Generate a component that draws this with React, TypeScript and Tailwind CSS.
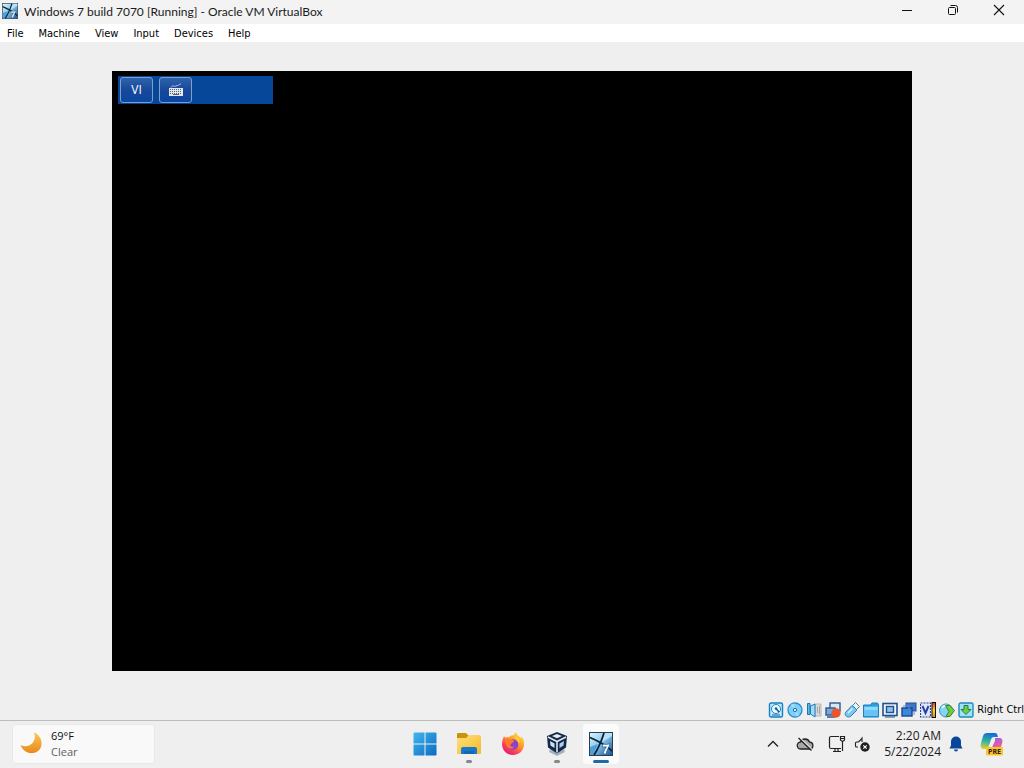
import React from "react";

const menus = ["File", "Machine", "View", "Input", "Devices", "Help"];

// Windows 7 guest logo, used in the title bar and in the taskbar
function GuestLogo({ className, id }: { className: string; id: string }) {
  return (
    <svg viewBox="0 0 24 24" className={className}>
      <defs>
        <linearGradient id={id} x1="0" y1="0" x2="1" y2="1">
          <stop offset="0" stopColor="#e2f5fc" />
          <stop offset="0.45" stopColor="#8ccbee" />
          <stop offset="1" stopColor="#0f5296" />
        </linearGradient>
      </defs>
      <rect x="0.5" y="0.5" width="23" height="23" fill={`url(#${id})`} stroke="#2c3f50" />
      <path d="M1 15l8-3-5 11H1z" fill="#4f9fdc" />
      <path d="M15 1h8v3l-10 6-1-1z" fill="#b4e3f6" />
      <path d="M1 5.500C8 8.500 16 12 23 19" fill="none" stroke="#0b2338" strokeWidth="1.800" />
      <path d="M15 1C12.500 9 9 17 5 23" fill="none" stroke="#0b2338" strokeWidth="1.800" />
      <path d="M13.500 12.500c2-.9 4 .9 7.500-.9-1 3.900-3.200 6-4 10.400h-2.700c.4-3.300 2-5.300 3.200-7.200-1.500.3-2.500-.3-4 .5z" fill="#fff" stroke="#174f82" strokeWidth="0.600" />
    </svg>
  );
}

function TitleBar() {
  return (
    <header className="flex h-6 items-center bg-[#f3f3f3]">
      <GuestLogo id="titleLogo" className="mb-0.5 ml-0.5 h-4 w-4" />
      <h1 className="ml-1.5 flex-1 font-['Lato','Open_Sans',sans-serif] text-[12px] leading-4 text-[#1a1a1a]">
        Windows 7 build 7070 [Running] - Oracle VM VirtualBox
      </h1>
      <div className="flex pr-0.5 pb-1">
        <button aria-label="Minimize" className="flex h-5 w-[46px] items-center justify-center">
          <svg viewBox="0 0 12 12" className="h-3 w-3" fill="none" stroke="#111">
            <path d="M1 6.500h10" />
          </svg>
        </button>
        <button aria-label="Restore" className="flex h-5 w-[46px] items-center justify-center">
          <svg viewBox="0 0 12 12" className="h-3 w-3" fill="none" stroke="#111">
            <rect x="1.500" y="3.500" width="7" height="7" rx="1" />
            <path d="M3.500 1.500h5a2 2 0 0 1 2 2v5" />
          </svg>
        </button>
        <button aria-label="Close" className="flex h-5 w-[46px] items-center justify-center">
          <svg viewBox="0 0 12 12" className="h-3 w-3" fill="none" stroke="#111" strokeWidth="1.100">
            <path d="M1 1l10 10M11 1L1 11" />
          </svg>
        </button>
      </div>
    </header>
  );
}

function MenuBar() {
  return (
    <nav className="flex h-[18px] items-end bg-white font-['DejaVu_Sans_Condensed','DejaVu_Sans',sans-serif] text-[11px] leading-4 text-black">
      {menus.map((m) => (
        <button key={m} className="pr-2 pl-[7px]">{m}</button>
      ))}
    </nav>
  );
}

// language bar shown inside the guest
function LanguageBar() {
  const key =
    "flex h-[26px] w-[33px] items-center justify-center rounded-[3px] border border-[#7f9fcb] bg-linear-to-b from-[#2f62ab] via-[#17489a] to-[#0a46a0]";
  return (
    <div className="flex h-7 w-[155px] items-center gap-1.5 bg-[#064799] pl-0.5">
      <button className={`${key} font-['Open_Sans',sans-serif] text-[12px] leading-4 text-white`}>VI</button>
      <button aria-label="Keyboard" className={key}>
        <svg viewBox="0 0 16 16" className="h-4 w-4">
          <path d="M3 5.500C4 2.500 6 5 8 4S11 3.500 13 1.500" fill="none" stroke="#b9c6d6" strokeWidth="1" />
          <path d="M1 6h14v8H1z" fill="#e4e8ed" />
          <path d="M2 7.500h12M2 9.500h12M2 11.500h12" stroke="#51647f" strokeDasharray="1 1" />
          <path d="M5 12.500h6" stroke="#51647f" />
        </svg>
      </button>
    </div>
  );
}

const devices = [
  {
    name: "Hard disks",
    art: (
      <>
        <rect x="1.500" y="1" width="13" height="14" rx="1.500" fill="#b9ecff" stroke="#1680c4" strokeWidth="1.400" />
        <circle cx="8" cy="7" r="4.500" fill="#f1fbff" stroke="#2582bd" />
        <path d="M8 6.500l3 3.500" fill="none" stroke="#12619c" strokeWidth="1.600" />
        <circle cx="8" cy="6.500" r="1.300" fill="#12619c" />
        <path d="M4 13h8" stroke="#12619c" />
      </>
    ),
  },
  {
    name: "Optical drives",
    art: (
      <>
        <circle cx="8" cy="8" r="7" fill="#7ed0f7" stroke="#2a8fcd" strokeWidth="1.300" />
        <path d="M8 8L3.500 3A7 7 0 0 1 7 1.500zM8 8l4.500 5A7 7 0 0 1 9 14.500z" fill="#9bddfb" />
        <circle cx="8" cy="8" r="1.600" fill="#fff" stroke="#1b659c" />
      </>
    ),
  },
  {
    name: "Audio",
    art: (
      <>
        <path d="M9 2h6v12H9z" fill="#d6d8da" stroke="#b4b8bc" />
        <path d="M1.500 1.500h2.500v11H1.500z" fill="#5fbce9" stroke="#1a76ae" />
        <path d="M4.500 4L9 2v13l-4.500-3z" fill="#9fdcf8" stroke="#2379b0" />
        <path d="M11.500 5v6M13.500 4v8" stroke="#a5a5a5" />
      </>
    ),
  },
  {
    name: "Network",
    art: (
      <>
        <rect x="5" y="1" width="10" height="8" fill="#d7e6f4" stroke="#31588d" strokeWidth="1.400" />
        <rect x="1" y="6" width="9" height="7" fill="#78a9dc" stroke="#31588d" strokeWidth="1.400" />
        <path d="M2 15h8" stroke="#31588d" strokeWidth="1.500" />
        <circle cx="11" cy="11" r="4.700" fill="#e9562c" />
      </>
    ),
  },
  {
    name: "USB",
    art: (
      <>
        <path d="M1.500 10.500L8 3.500l5 4.500L6.500 14.500c-3 1.500-6.500-1-5-4z" fill="#7cc6f2" stroke="#2b7dbb" />
        <path d="M8.500 3.500l3-3 4 4-3 3z" fill="#e4f4fc" stroke="#4e7fa5" />
        <path d="M4 11l4.500-4.500" stroke="#d9f2ff" strokeWidth="1.500" />
      </>
    ),
  },
  {
    name: "Shared folders",
    art: (
      <>
        <path d="M0.500 3h7l1.500-2h5.500l1 1.500v12.500H.5z" fill="#2a9fe0" stroke="#1c7fc0" />
        <path d="M1 4.500h14V14H1z" fill="#66c4f5" />
        <path d="M1.500 5h13v3h-13z" fill="#8fd8fb" />
      </>
    ),
  },
  {
    name: "Display",
    art: (
      <>
        <rect x="1" y="1.500" width="14" height="12" fill="#e9f3fb" stroke="#23518c" strokeWidth="1.600" />
        <rect x="4.500" y="4.500" width="7" height="6" fill="#8bc4ec" stroke="#23518c" strokeWidth="1.400" />
        <path d="M3 15h10" stroke="#23518c" />
      </>
    ),
  },
  {
    name: "Recording",
    art: (
      <>
        <rect x="5" y="1" width="10" height="8" fill="#3e77c3" stroke="#24509b" />
        <rect x="1" y="6" width="10" height="8" fill="#3b87de" stroke="#1c4692" strokeWidth="1.400" />
        <path d="M2 4h6v3M13 10v3" fill="none" stroke="#5b91ce" />
      </>
    ),
  },
  {
    name: "Features",
    art: (
      <>
        <rect x="0.500" y="1" width="10" height="14" fill="#dce8fb" stroke="#2d3c98" strokeDasharray="2 1" strokeWidth="1.200" />
        <path d="M2.500 4l3 7 3-7" fill="none" stroke="#28419e" strokeWidth="2" />
        <defs>
          <linearGradient id="load" x1="0" y1="0" x2="0" y2="1">
            <stop offset="0" stopColor="#e8301c" />
            <stop offset="0.500" stopColor="#fbd62c" />
            <stop offset="1" stopColor="#e88a1c" />
          </linearGradient>
        </defs>
        <rect x="12" y="0.500" width="3.500" height="15" fill="url(#load)" stroke="#111" />
      </>
    ),
  },
  {
    name: "Mouse integration",
    art: (
      <>
        <ellipse cx="7" cy="8.500" rx="6.500" ry="6.500" fill="#83d3f3" stroke="#358fbd" />
        <path d="M3 6c2-3 5-3 6-1" stroke="#e7faff" fill="none" strokeWidth="2" />
        <path d="M6.500 3.500H11l4.500 5L11 14.500H7l3-5z" fill="#72cc3f" stroke="#2f872a" />
      </>
    ),
  },
  {
    name: "Keyboard capture",
    art: (
      <>
        <rect x="1" y="1" width="14" height="14" rx="1.500" fill="#9ee2fb" stroke="#2588bd" strokeWidth="1.400" />
        <path d="M6 3.500h4v4h3L8 12.500l-5-5h3z" fill="#6fce48" stroke="#238039" />
      </>
    ),
  },
];

function StatusBar() {
  return (
    <div className="flex h-5 items-center justify-end gap-[3px] bg-[#efefef]">
      {devices.map((d) => (
        <button key={d.name} aria-label={d.name}>
          <svg viewBox="0 0 16 16" className="h-4 w-4">{d.art}</svg>
        </button>
      ))}
      <span className="font-['DejaVu_Sans_Condensed','DejaVu_Sans',sans-serif] text-[11px] leading-4 text-black">Right Ctrl</span>
    </div>
  );
}

function Weather() {
  return (
    <button className="ml-3 flex h-10 w-[143px] items-center gap-2 rounded-[4px] border border-[#e8e8e8] bg-[#f9f9f9] pl-1.5 text-left">
      <svg viewBox="0 0 24 24" className="h-6 w-6">
        <defs>
          <linearGradient id="moon" x1="0" y1="0" x2="0" y2="1">
            <stop offset="0" stopColor="#fbc65a" />
            <stop offset="1" stopColor="#e98a1a" />
          </linearGradient>
        </defs>
        <path d="M15 .5C21 3 24 9 22 15c-2.500 7.500-16 9.500-20.500-2 5 2.500 9.500 1 12-2 2.500-3.300 3-6 1.500-10.500z" fill="url(#moon)" />
      </svg>
      <span className="flex flex-col text-[11px] leading-4">
        <span className="text-[#111]">69°F</span>
        <span className="text-[#606060]">Clear</span>
      </span>
    </button>
  );
}

function TaskButton({ label, mark, children }: { label: string; mark?: string; children: React.ReactNode }) {
  return (
    <button
      aria-label={label}
      className={`relative flex h-10 w-9 items-center justify-center rounded-[4px] ${mark === "active" ? "bg-[#fbfbfb]" : ""}`}
    >
      {children}
      {mark === "open" && <span className="absolute bottom-px h-[3px] w-1.5 rounded-full bg-[#868686]" />}
      {mark === "active" && <span className="absolute bottom-px h-[3px] w-4 rounded-full bg-[#1c6ba5]" />}
    </button>
  );
}

function Apps() {
  return (
    <div className="flex gap-2 pl-px">
      <TaskButton label="Start">
        <svg viewBox="0 0 24 24" className="h-6 w-6">
          <defs>
            <linearGradient id="start" x1="0" y1="0" x2="24" y2="24" gradientUnits="userSpaceOnUse">
              <stop offset="0" stopColor="#43b9ef" />
              <stop offset="1" stopColor="#0868c2" />
            </linearGradient>
          </defs>
          <path d="M1.500.5h10v11h-11v-10a1 1 0 0 1 1-1zM12.500.5h10a1 1 0 0 1 1 1v10h-11zM.5 12.500h11v11h-10a1 1 0 0 1-1-1zM12.500 12.500h11v10a1 1 0 0 1-1 1h-10z" fill="url(#start)" />
        </svg>
      </TaskButton>
      <TaskButton label="File Explorer" mark="open">
        <svg viewBox="0 0 26 24" className="h-6 w-[26px]">
          <defs>
            <linearGradient id="folder" x1="0" y1="0" x2="1" y2="1">
              <stop offset="0" stopColor="#ffe07a" />
              <stop offset="1" stopColor="#f5b92b" />
            </linearGradient>
          </defs>
          <path d="M2 1h8l3 3h10a2 2 0 0 1 2 2v5H1V2a1 1 0 0 1 1-1z" fill="#c9940c" />
          <path d="M1 6h9l3-3h10a2 2 0 0 1 2 2v16a1 1 0 0 1-1 1H2a1 1 0 0 1-1-1z" fill="url(#folder)" />
          <path d="M5 22v-5a2 2 0 0 1 2-2h12a2 2 0 0 1 2 2v5z" fill="#1678c8" />
          <path d="M8 19h10v3H8z" fill="#0f69b4" />
        </svg>
      </TaskButton>
      <TaskButton label="Firefox">
        <svg viewBox="0 0 24 24" className="h-6 w-6">
          <defs>
            <linearGradient id="fox" x1="0.900" y1="0" x2="0.200" y2="1">
              <stop offset="0" stopColor="#ffe83b" />
              <stop offset="0.450" stopColor="#ff952b" />
              <stop offset="0.750" stopColor="#f83b58" />
              <stop offset="1" stopColor="#db1689" />
            </linearGradient>
          </defs>
          <path d="M3 4l1.500 2C6 4.500 7 5 8 5.200 10 3 12 3 13 3.500 13 2 14 1 15 .5c1 3 4 4 5 6 .5-.5.300-1.500 0-2.500 2.500 2.500 3.500 6 3 9.500C22 19.500 17.500 23 12 23 5.500 23 1 18 1 12 1 9 2 6.500 3 4z" fill="url(#fox)" />
          <circle cx="12" cy="12.500" r="5.300" fill="#8a42ca" />
          <path d="M4 8c4-2 6 0 8 0 1.500.3 1.500 2-1 3-1 .5-1 1.500-2 2 1 2 3 2 4.500 1.500-1 2-4.500 3-6.500 1C5 14 4.500 11 4 8z" fill="#ff7a2a" />
          <path d="M13 4c4 1 6 4 6 7l-2-1c0-2-2-3-4-6z" fill="#ffd833" />
        </svg>
      </TaskButton>
      <TaskButton label="Oracle VM VirtualBox" mark="open">
        <svg viewBox="0 0 24 24" className="h-6 w-6">
          <path d="M5 17l7 4 7-4 1 3-8 4-8-4z" fill="#a7b2be" />
          <path d="M12 0l10 4-1 11.500-9 6-9-6L2 4z" fill="#13294a" />
          <path d="M3 5l9 4.500L21 5M12 9.500v11" fill="none" stroke="#dbe8f3" strokeWidth="1.600" />
          <path d="M12 2l5 2-5 2.300L7 4z" fill="#e3edf5" />
          <path d="M5 9l4.500 2.500V16L5.500 13.500z" fill="#cfe0ee" />
          <path d="M19 9l-4.500 2.500V16l4-2.500z" fill="#b5cee3" />
        </svg>
      </TaskButton>
      <TaskButton label="Windows 7 build 7070" mark="active">
        <GuestLogo id="taskLogo" className="h-6 w-6" />
      </TaskButton>
    </div>
  );
}

function Tray() {
  return (
    <div className="flex items-center justify-end pr-5">
      <button aria-label="Show hidden icons" className="mr-[17px]">
        <svg viewBox="0 0 12 12" className="h-3 w-3" fill="none" stroke="#222" strokeWidth="1.300">
          <path d="M1 8.500l5-5 5 5" />
        </svg>
      </button>
      <button aria-label="OneDrive" className="mr-3.5">
        <svg viewBox="0 0 18 16" className="h-4 w-[18px]" stroke="#222" strokeWidth="1.300">
          <path d="M5 13a3.500 3.500 0 0 1-.5-7C6 2 12 2 13.500 6c4.500.5 4.500 7 0 7z" fill="#a8a8a8" />
          <path d="M3.500 1.500l13 12.500" stroke="#efefef" strokeWidth="1.300" />
          <path d="M2.500 2l13 12.500" />
        </svg>
      </button>
      <button aria-label="Network" className="mr-2">
        <svg viewBox="0 0 18 18" className="h-[18px] w-[18px]" fill="none" stroke="#222" strokeWidth="1.200">
          <path d="M11 1.500H3a1.500 1.500 0 0 0-1.500 1.500v9A1.500 1.500 0 0 0 3 13.500h10M5 16.500h8M7 13.500v3M10 13.500v3" />
          <path d="M12.500 1.500h4v3.500l-1 1h-2l-1-1zM12.500 3.500h4M14.500 6V16" />
        </svg>
      </button>
      <button aria-label="Volume" className="mr-3.5">
        <svg viewBox="0 0 16 16" className="h-4 w-4">
          <path d="M7 3.500L4.500 6H2.500a1 1 0 0 0-1 1v3a1 1 0 0 0 1 1H4M6 4.500L8 2v4" fill="none" stroke="#222" strokeWidth="1.100" />
          <circle cx="11" cy="11" r="4.700" fill="#202020" />
          <path d="M9.300 9.300l3.400 3.400M12.700 9.300l-3.400 3.400" stroke="#fff" strokeWidth="1.200" />
        </svg>
      </button>
      <button className="mr-[7px] flex flex-col items-end text-[12px] leading-4 whitespace-nowrap text-[#1a1a1a]">
        <span>2:20 AM</span>
        <span>5/22/2024</span>
      </button>
      <button aria-label="Notifications" className="mr-4">
        <svg viewBox="0 0 16 16" className="h-4 w-4" fill="#07469a">
          <path d="M8 .5a5 5 0 0 1 5 5v4l1.500 3h-13l1.500-3v-4a5 5 0 0 1 5-5zM6 13.500h4a2 2 0 0 1-4 0z" />
        </svg>
      </button>
      <button aria-label="Copilot">
        <svg viewBox="0 0 24 24" className="h-6 w-6">
          <defs>
            <linearGradient id="copL" x1="0.500" y1="0" x2="0.300" y2="1">
              <stop offset="0" stopColor="#1869d6" />
              <stop offset="0.500" stopColor="#28b3a0" />
              <stop offset="1" stopColor="#e2cc3c" />
            </linearGradient>
            <linearGradient id="copR" x1="0.300" y1="0" x2="0.700" y2="1">
              <stop offset="0" stopColor="#8e62ec" />
              <stop offset="0.600" stopColor="#e85aac" />
              <stop offset="1" stopColor="#f68c5a" />
            </linearGradient>
          </defs>
          <path d="M7 1h8c2 0 2.500 2 3 4h-4c-2 0-3 2-3.500 4L8 17H4c-3 0-4-2-3-6l2-7c.7-2 2-3 4-3z" fill="url(#copL)" />
          <path d="M15 6h4c3 0 4 2 3.200 5L20 19H9c2 0 2.500-1 3-3l1-3 2-4z" fill="url(#copR)" />
          <rect x="6" y="15" width="17" height="8.500" rx="1.500" fill="#ffc423" />
          <text x="14.500" y="22" textAnchor="middle" fontSize="7" fontWeight="700" fontFamily="Noto Sans, sans-serif" fill="#222">PRE</text>
        </svg>
      </button>
    </div>
  );
}

//
export default function App() {
  return (
    <div className="flex min-h-screen flex-col bg-[#efefef]">
      <TitleBar />
      <MenuBar />
      <main className="flex flex-1 items-center justify-center">
        <div className="aspect-[4/3] w-full max-w-[800px] bg-black pt-[5px] pl-1.5">
          <LanguageBar />
        </div>
      </main>
      <StatusBar />
      <footer className="grid h-12 grid-cols-[1fr_auto_1fr] items-center border-t border-[#bdbdbd] bg-[#efefef] pb-0.5 font-['Open_Sans','Noto_Sans',sans-serif]">
        <Weather />
        <Apps />
        <Tray />
      </footer>
    </div>
  );
}
